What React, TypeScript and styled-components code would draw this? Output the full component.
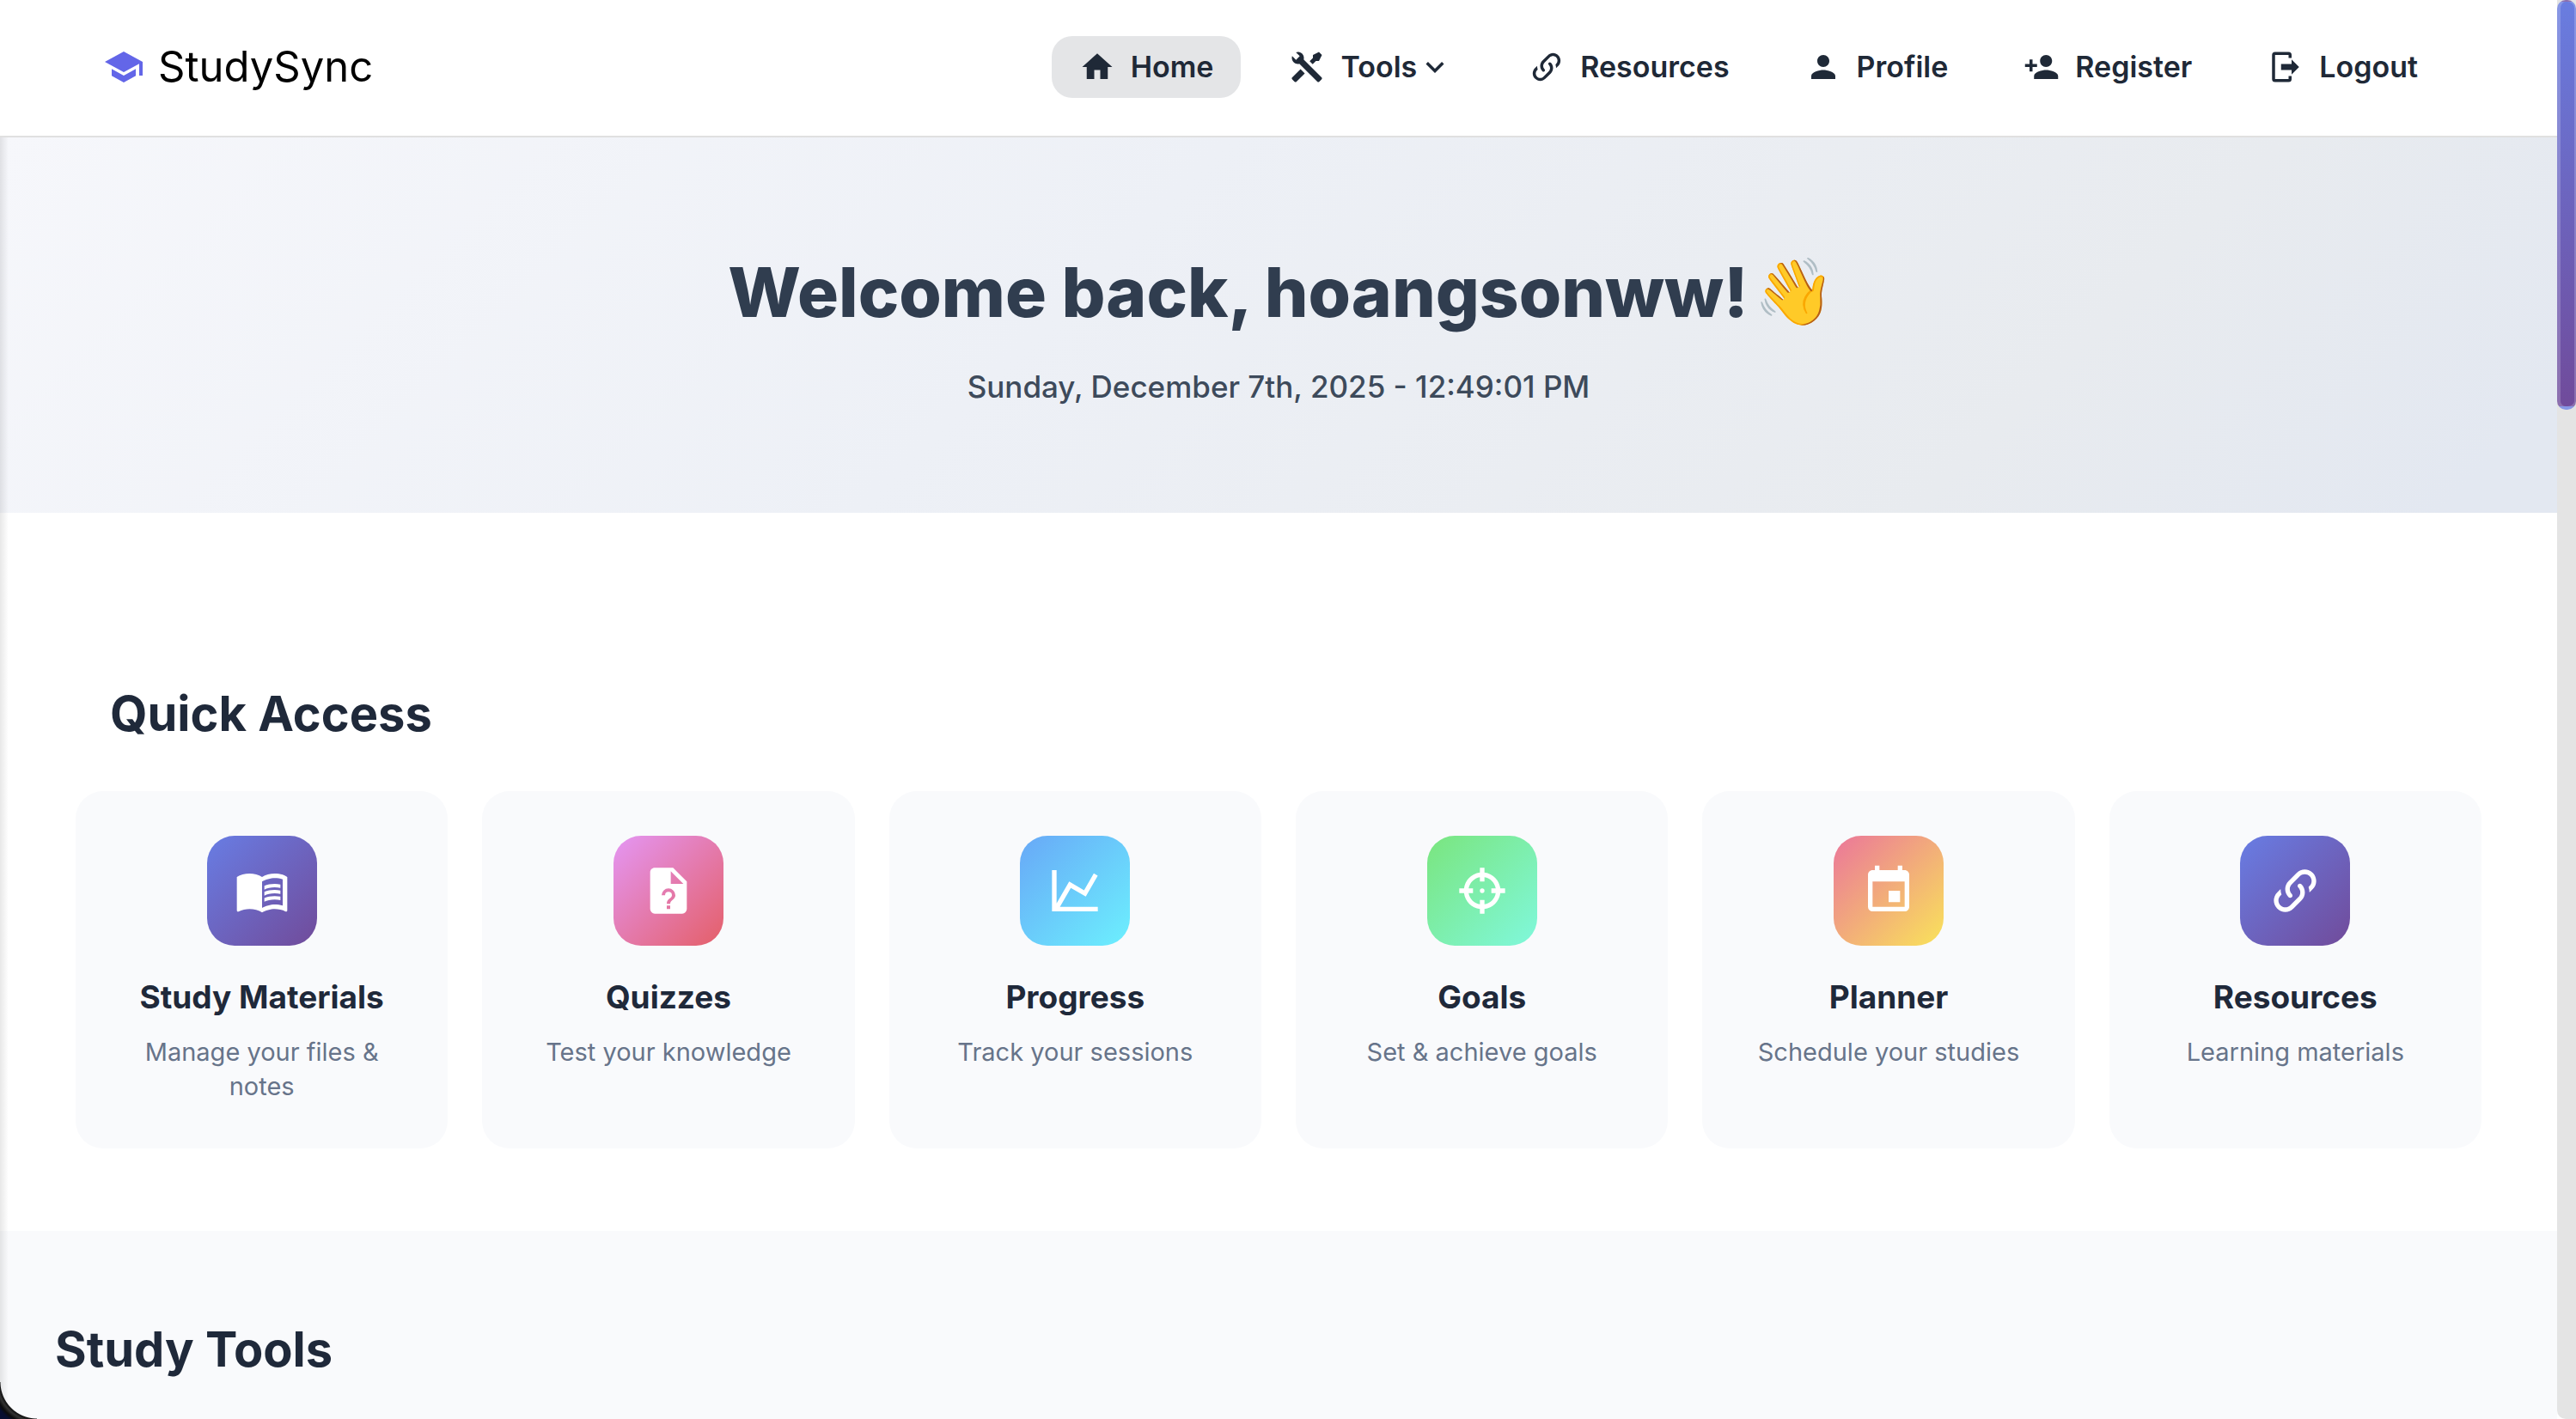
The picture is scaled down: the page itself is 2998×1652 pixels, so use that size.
import React from 'react';
import styled, { createGlobalStyle } from 'styled-components';
import {
  MdEvent,
  MdExpandMore,
  MdHome,
  MdMenuBook,
  MdPerson,
  MdPersonAdd,
  MdSchool,
} from 'react-icons/md';

const GlobalStyle = createGlobalStyle`
  *, *::before, *::after { box-sizing: border-box; }
  body {
    margin: 0;
    background: #ffffff;
    color: #1e293b;
    font-family: Inter, "Liberation Sans", sans-serif;
  }
  h1, h2, h3, p { margin: 0; }
`;

const Window = styled.div`
  position: relative;
  display: flex;
  height: 100vh;
  overflow: hidden;
`;

const Page = styled.div`
  flex: 1;
  min-width: 0;
  display: flex;
  flex-direction: column;
`;

const Header = styled.header`
  display: flex;
  align-items: center;
  justify-content: space-between;
  flex-shrink: 0;
  padding: 42px 130px 44px 120px;
  background: #ffffff;
  border-bottom: 2px solid #e0e0e0;
`;

const Brand = styled.a`
  display: flex;
  align-items: center;
  gap: 16px;
  color: #000000;
  font-size: 49px;
  line-height: 72px;
  text-decoration: none;

  svg {
    width: 48px;
    height: 48px;
    color: #6366e8;
  }
`;

const Nav = styled.nav`
  display: flex;
  align-items: center;
  gap: 24px;
`;

const navItem = `
  display: flex;
  align-items: center;
  height: 72px;
  padding: 0 32px;
  border: 0;
  border-radius: 24px;
  color: #1f2937;
  font-family: inherit;
  font-size: 34px;
  font-weight: 600;
  line-height: 40px;
  text-decoration: none;
  cursor: pointer;

  svg {
    width: 42px;
    height: 42px;
  }
`;

const NavLink = styled.a<{ $active?: boolean }>`
  ${navItem}
  gap: 18px;
  background: ${(p) => (p.$active ? '#e4e5e7' : 'transparent')};
`;

const NavMenuButton = styled.button`
  ${navItem}
  background: transparent;

  span {
    margin-left: 18px;
  }
`;

const Hero = styled.section`
  display: flex;
  flex-direction: column;
  align-items: center;
  gap: 34px;
  flex-shrink: 0;
  padding: 132px 32px 119px;
  background: linear-gradient(135deg, #f6f7fb 0%, #edf0f6 42%, #e8ebef 78%, #e3e8f1 96%);
`;

const Welcome = styled.h1`
  display: flex;
  align-items: center;
  gap: 14px;
  color: #303d4f;
  font-size: 80px;
  font-weight: 800;
  line-height: 96px;
`;

const Wave = styled.span`
  display: flex;
  justify-content: center;
  width: 80px;
  font-family: "Noto Color Emoji", sans-serif;
  font-size: 76px;
  line-height: 88px;
`;

const Clock = styled.p`
  color: #3d4a5b;
  font-size: 35px;
  font-weight: 500;
  line-height: 56px;
`;

const QuickAccess = styled.section`
  flex-shrink: 0;
  padding: 200px 88px 96px;
  background: #ffffff;
`;

const SectionTitle = styled.h2`
  color: #1f293a;
  font-size: 56px;
  font-weight: 700;
  line-height: 68px;

  ${QuickAccess} & {
    padding: 0 40px 56px;
  }
`;

const CardGrid = styled.div`
  display: grid;
  grid-template-columns: repeat(6, 1fr);
  gap: 40px;
`;

const Card = styled.a`
  display: flex;
  flex-direction: column;
  align-items: center;
  padding: 52px;
  border-radius: 32px;
  background: #f9fafc;
  text-align: center;
  text-decoration: none;
`;

const Tile = styled.span<{ $from: string; $to: string }>`
  display: flex;
  align-items: center;
  justify-content: center;
  width: 128px;
  height: 128px;
  border-radius: 32px;
  background: linear-gradient(135deg, ${(p) => p.$from}, ${(p) => p.$to});
  color: #ffffff;

  svg {
    width: 64px;
    height: 64px;
  }
`;

const CardTitle = styled.h3`
  margin: 38px 0 22px;
  color: #1f293a;
  font-size: 37px;
  font-weight: 700;
  line-height: 44px;
`;

const CardText = styled.p`
  color: #67748a;
  font-size: 29px;
  line-height: 40px;
`;

const StudyTools = styled.section`
  flex: 1 0 auto;
  padding: 104px 64px 0;
  background: #f9fafc;
`;

const ScrollTrack = styled.div`
  flex: 0 0 22px;
  background: #e4e4e4;
  border-bottom-left-radius: 10px;
`;

const ScrollThumb = styled.div`
  height: 477px;
  border: solid rgba(255, 255, 255, 0.2);
  border-width: 2px 2px 4px 4px;
  border-radius: 10px;
  background: linear-gradient(#697de0, #704b9b);
`;

const EdgeShade = styled.div`
  position: absolute;
  top: 160px;
  bottom: 0;
  left: 0;
  width: 10px;
  background: linear-gradient(90deg, rgba(0, 0, 0, 0.09), rgba(0, 0, 0, 0));
  pointer-events: none;
`;

const WindowCorner = styled.div`
  position: absolute;
  bottom: 0;
  left: 0;
  width: 43px;
  height: 43px;
  background: radial-gradient(
    circle at 100% 0,
    transparent 42px,
    #111111 43px,
    #333333 46px,
    #0b0b0c 50px,
    #070d30 54px
  );
  pointer-events: none;
`;

function PathIcon({ d }: { d: string }) {
  return (
    <svg viewBox="0 0 24 24" fill="currentColor" fillRule="evenodd" aria-hidden="true">
      <path d={d} />
    </svg>
  );
}

const TOOLS =
  'M21.71 20.29L20.29 21.71A1 1 0 0 1 18.88 21.71L7 9.85A3.81 3.81 0 0 1 6 10A4 4 0 0 1 2.22 4.7L4.76 7.24L5.29 6.71L6.71 5.29L7.24 4.76L4.7 2.22A4 4 0 0 1 10 6A3.81 3.81 0 0 1 9.85 7L21.71 18.88A1 1 0 0 1 21.71 20.29M2.29 18.88A1 1 0 0 0 2.29 20.29L3.71 21.71A1 1 0 0 0 5.12 21.71L10.59 16.25L7.76 13.42M20 2L16 4V6L13.83 8.17L15.83 10.17L18 8L20 8L22 4Z';
const LINK =
  'M10.59 13.41C11 13.8 11 14.44 10.59 14.83C10.2 15.22 9.56 15.22 9.17 14.83C7.22 12.88 7.22 9.71 9.17 7.76L12.71 4.22C14.66 2.27 17.83 2.27 19.78 4.22C21.73 6.17 21.73 9.34 19.78 11.29L18.29 12.78C18.3 11.96 18.17 11.14 17.89 10.36L18.36 9.88C19.54 8.71 19.54 6.81 18.36 5.64C17.19 4.46 15.29 4.46 14.12 5.64L10.59 9.17C9.41 10.34 9.41 12.24 10.59 13.41M13.41 9.17C13.8 8.78 14.44 8.78 14.83 9.17C16.78 11.12 16.78 14.29 14.83 16.24L11.29 19.78C9.34 21.73 6.17 21.73 4.22 19.78C2.27 17.83 2.27 14.66 4.22 12.71L5.71 11.22C5.7 12.04 5.83 12.86 6.11 13.65L5.64 14.12C4.46 15.29 4.46 17.19 5.64 18.36C6.81 19.54 8.71 19.54 9.88 18.36L13.41 14.83C14.59 13.66 14.59 11.76 13.41 10.59C13 10.2 13 9.56 13.41 9.17Z';
const LOGOUT =
  'M16 17V14H9V10H16V7L21 12L16 17M14 2A2 2 0 0 1 16 4V6H14V4H5V20H14V18H16V20A2 2 0 0 1 14 22H5A2 2 0 0 1 3 20V4A2 2 0 0 1 5 2H14Z';
const FILE_QUESTION =
  'M14 2H6C4.89 2 4 2.89 4 4V20A2 2 0 0 0 6 22H18A2 2 0 0 0 20 20V8L14 2M13 3.5L18.5 9H13V3.5M12 11A3 3 0 0 1 15 14C15 15.88 12.75 16.06 12.75 17.75H11.25C11.25 15.31 13.5 15.5 13.5 14A1.5 1.5 0 0 0 12 12.5A1.5 1.5 0 0 0 10.5 14H9A3 3 0 0 1 12 11M12.75 18.5V20H11.25V18.5H12.75Z';
const CHART = 'M16 11.78L20.24 4.45L21.97 5.45L16.74 14.5L10.23 10.75L5.46 19H22V21H2V3H4V17.54L9.5 8L16 11.78Z';
const TARGET =
  'M11 2V4.07C7.38 4.53 4.53 7.38 4.07 11H2V13H4.07C4.53 16.62 7.38 19.47 11 19.93V22H13V19.93C16.62 19.47 19.47 16.62 19.93 13H22V11H19.93C19.47 7.38 16.62 4.53 13 4.07V2M11 6.08V8H13V6.09C15.5 6.5 17.5 8.5 17.92 11H16V13H17.91C17.5 15.5 15.5 17.5 13 17.92V16H11V17.91C8.5 17.5 6.5 15.5 6.08 13H8V11H6.09C6.5 8.5 8.5 6.5 11 6.08M12 11A1 1 0 0 0 11 12A1 1 0 0 0 12 13A1 1 0 0 0 13 12A1 1 0 0 0 12 11Z';

const cards = [
  { title: 'Study Materials', text: 'Manage your files & notes', icon: <MdMenuBook />, from: '#687de4', to: '#714b9a' },
  { title: 'Quizzes', text: 'Test your knowledge', icon: <PathIcon d={FILE_QUESTION} />, from: '#e496f4', to: '#e45f68' },
  { title: 'Progress', text: 'Track your sessions', icon: <PathIcon d={CHART} />, from: '#68a8f7', to: '#6cf0fe' },
  { title: 'Goals', text: 'Set & achieve goals', icon: <PathIcon d={TARGET} />, from: '#7ae57e', to: '#80f8dc' },
  { title: 'Planner', text: 'Schedule your studies', icon: <MdEvent />, from: '#eb769a', to: '#f9e35a' },
  { title: 'Resources', text: 'Learning materials', icon: <PathIcon d={LINK} />, from: '#687de4', to: '#714b9a' },
];

export default function App() {
  return (
    <>
      <GlobalStyle />
      <Window>
        <Page>
          <Header>
            <Brand href="#">
              <MdSchool />
              StudySync
            </Brand>
            <Nav>
              <NavLink href="#home" $active aria-current="page">
                <MdHome />
                Home
              </NavLink>
              <NavMenuButton type="button" aria-haspopup="menu">
                <PathIcon d={TOOLS} />
                <span>Tools</span>
                <MdExpandMore />
              </NavMenuButton>
              <NavLink href="#resources">
                <PathIcon d={LINK} />
                Resources
              </NavLink>
              <NavLink href="#profile">
                <MdPerson />
                Profile
              </NavLink>
              <NavLink href="#register">
                <MdPersonAdd />
                Register
              </NavLink>
              <NavLink href="#logout">
                <PathIcon d={LOGOUT} />
                Logout
              </NavLink>
            </Nav>
          </Header>
          <Hero>
            <Welcome>
              Welcome back, hoangsonww! <Wave>👋</Wave>
            </Welcome>
            <Clock>Sunday, December 7th, 2025 - 12:49:01 PM</Clock>
          </Hero>
          <QuickAccess>
            <SectionTitle>Quick Access</SectionTitle>
            <CardGrid>
              {cards.map((card) => (
                <Card key={card.title} href="#">
                  <Tile $from={card.from} $to={card.to}>
                    {card.icon}
                  </Tile>
                  <CardTitle>{card.title}</CardTitle>
                  <CardText>{card.text}</CardText>
                </Card>
              ))}
            </CardGrid>
          </QuickAccess>
          <StudyTools>
            <SectionTitle>Study Tools</SectionTitle>
          </StudyTools>
        </Page>
        <ScrollTrack>
          <ScrollThumb />
        </ScrollTrack>
        <EdgeShade />
        <WindowCorner />
      </Window>
    </>
  );
}
